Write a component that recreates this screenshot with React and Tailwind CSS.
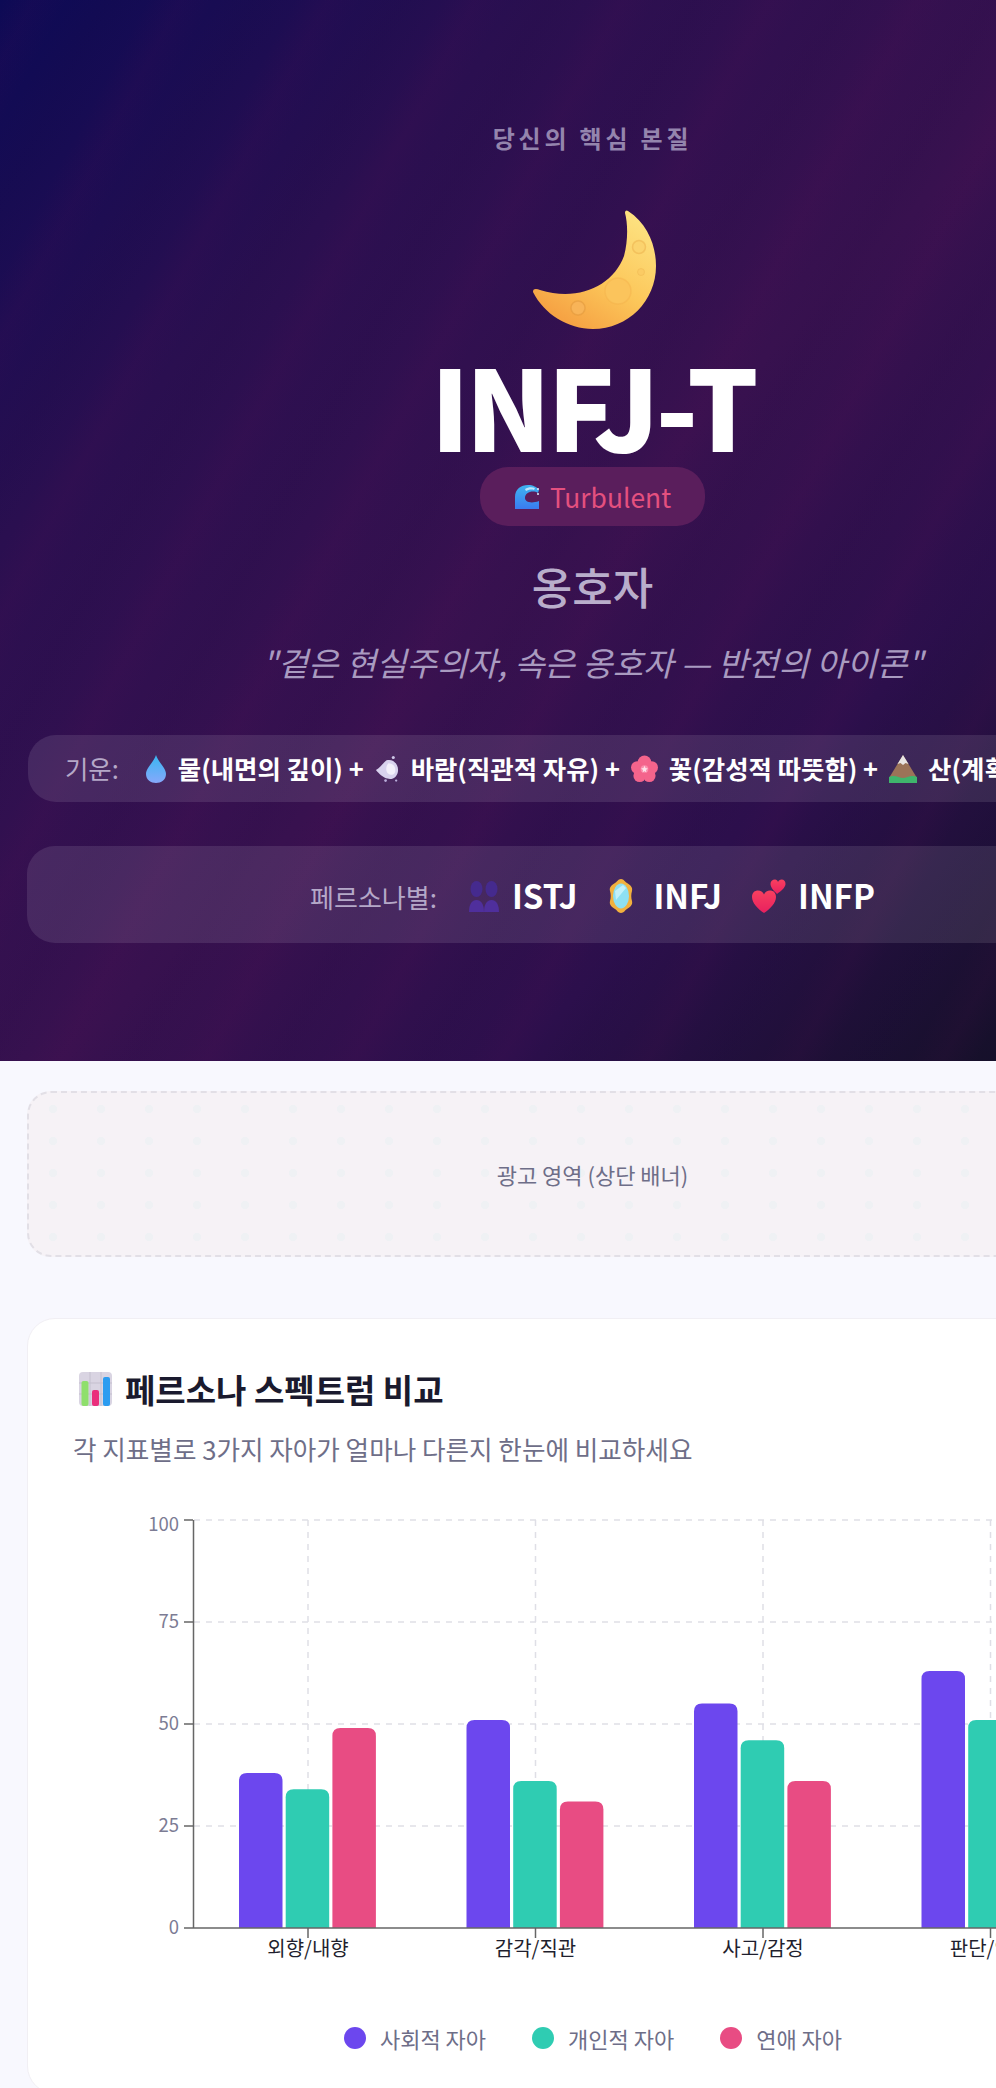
import React from "react";

const KR = { fontFamily: '"Noto Sans CJK KR", "Noto Sans", sans-serif' };

const groups = [
  { x: 307, label: "외향/내향", values: [38, 34, 49] },
  { x: 534.5, label: "감각/직관", values: [51, 36, 31] },
  { x: 762, label: "사고/감정", values: [55, 46, 36] },
  { x: 989.5, label: "판단/인식", values: [63, 51, 42] },
];
const barColors = ["#6c47ee", "#2fccb2", "#e84c83"];

function Moon() {
  return (
    <svg width="136" height="130" viewBox="0 0 136 130">
      <defs>
        <linearGradient id="moonFill" x1="0.85" y1="0.1" x2="0.3" y2="0.95">
          <stop offset="0" stopColor="#fde07e" />
          <stop offset="0.55" stopColor="#fcc75a" />
          <stop offset="1" stopColor="#f6a344" />
        </linearGradient>
      </defs>
      <path
        d="M100 5C120 18 128 40 128 60C128 95 100 123 65 123C40 123 16 108 5 86C5 82 9 83 12 84C50 96 85 80 96 50C100 35 100 18 97 7C97 4 99 4 100 5Z"
        fill="url(#moonFill)"
      />
      <circle cx="90" cy="85" r="13" fill="#fbc45c" stroke="#f0ac48" strokeOpacity="0.35" strokeWidth="1.5" />
      <circle cx="111" cy="41" r="6.500" fill="#fbd36e" stroke="#e8ab48" strokeOpacity="0.45" strokeWidth="1.5" />
      <circle cx="113" cy="66" r="3.500" fill="#fbcb64" stroke="#e8ab48" strokeOpacity="0.35" strokeWidth="1" />
      <circle cx="50" cy="102" r="7" fill="#f8b458" stroke="#dc9238" strokeOpacity="0.45" strokeWidth="1.5" />
    </svg>
  );
}

function Wave() {
  return (
    <svg width="26" height="26" viewBox="0 0 26 26">
      <defs>
        <linearGradient id="waveFill" x1="0" y1="0" x2="0" y2="1">
          <stop offset="0" stopColor="#3fb4f0" />
          <stop offset="1" stopColor="#3a7bf0" />
        </linearGradient>
      </defs>
      <path d="M1 25V13C1 5 7 1 14 1C19 1 23 3 25 6L24 9C19 6 11 8 11 14C11 18 17 20 25 17V25Z" fill="url(#waveFill)" />
      <path d="M11 5C14 3 18 3 21 4L20 6C17 5 14 6 12 7Z" fill="#bfe6fb" />
      <circle cx="24" cy="5" r="1" fill="#dff3fd" />
      <circle cx="24" cy="10" r="1" fill="#dff3fd" />
    </svg>
  );
}

function Drop() {
  return (
    <svg width="22" height="30" viewBox="0 0 22 30">
      <defs>
        <linearGradient id="dropFill" x1="0" y1="0" x2="0" y2="1">
          <stop offset="0" stopColor="#38b6f2" />
          <stop offset="1" stopColor="#86a8fb" />
        </linearGradient>
      </defs>
      <path d="M11 1C13 8 21 14 21 20C21 26 16 29 11 29C6 29 1 26 1 20C1 14 9 8 11 1Z" fill="url(#dropFill)" />
    </svg>
  );
}

function Wind() {
  return (
    <svg width="25" height="30" viewBox="0 0 26 30">
      <path d="M12 6C18 4 24 9 24 16C24 23 18 27 13 25C9 24 4 20 1 16C5 14 8 9 12 6Z" fill="#d8d2ee" />
      <path d="M14 9C19 9 22 13 21 18C20 21 16 22 14 20C11 18 11 12 14 9Z" fill="#f3f0fb" />
      <circle cx="19" cy="3" r="1.6" fill="#cfc8e8" />
      <circle cx="11" cy="27" r="1.4" fill="#b9aedb" />
      <circle cx="22" cy="27" r="1.2" fill="#b9aedb" />
    </svg>
  );
}

function Flower() {
  return (
    <svg width="27" height="30" viewBox="0 0 28 30">
      <g fill="#f4648c">
        <circle cx="14" cy="8" r="7" />
        <circle cx="6.5" cy="13.5" r="6.5" />
        <circle cx="21.5" cy="13.5" r="6.5" />
        <circle cx="9" cy="22" r="6.5" />
        <circle cx="19" cy="22" r="6.5" />
      </g>
      <circle cx="14" cy="15" r="4" fill="#fb8fae" />
      <path d="M14 11.5L15 14L17.5 14.5L15.5 16L16 18.5L14 17L12 18.5L12.500 16L10.500 14.500L13 14Z" fill="#fde2ea" />
    </svg>
  );
}

function Mountain() {
  return (
    <svg width="28" height="30" viewBox="0 0 28 30">
      <path d="M14 1L28 24V29H0V24Z" fill="#9b7358" />
      <path d="M14 1L19.500 10L16.500 9L14 11L11.500 9L8.500 10Z" fill="#e9e5e3" />
      <path d="M0 23C6 20 10 24 14 24C18 24 22 20 28 23V29H0Z" fill="#3fb56c" />
    </svg>
  );
}

function People() {
  return (
    <svg width="32" height="32" viewBox="0 0 32 32">
      <g fill="#452a8e">
        <ellipse cx="8.500" cy="9" rx="6" ry="8" />
        <ellipse cx="23.500" cy="9" rx="6" ry="8" />
      </g>
      <g fill="#4f2f9c">
        <path d="M1 32C1 24 4 20 8.500 20C13 20 16 24 16 32Z" />
        <path d="M16 32C16 24 19 20 23.500 20C28 20 31 24 31 32Z" />
      </g>
    </svg>
  );
}

function Mirror() {
  return (
    <svg width="24" height="34" viewBox="0 0 24 34">
      <path d="M12 0C15 0 16 3 18 4C21 6 24 8 23 12C22 15 22 19 23 22C24 26 21 28 18 30C16 31 15 34 12 34C9 34 8 31 6 30C3 28 0 26 1 22C2 19 2 15 1 12C0 8 3 6 6 4C8 3 9 0 12 0Z" fill="#f2b13e" />
      <ellipse cx="12" cy="17" rx="8" ry="12.500" fill="#8ee0f2" />
      <path d="M6 12L14 6L17 9L7 21Z" fill="#c3f1f9" />
    </svg>
  );
}

function Hearts() {
  return (
    <svg width="34" height="34" viewBox="0 0 34 34">
      <defs>
        <linearGradient id="heartFill" x1="0" y1="0" x2="0" y2="1">
          <stop offset="0" stopColor="#f8405f" />
          <stop offset="1" stopColor="#e8205f" />
        </linearGradient>
      </defs>
      <path d="M12 34C6 30 0 24 0 18C0 13.500 3 11.500 6 11.500C8.500 11.500 11 13 12 15.500C13 13 15.500 11.500 18 11.500C21 11.500 24 13.500 24 18C24 24 18 30 12 34Z" fill="url(#heartFill)" />
      <path d="M25 15C22 12 18.500 8.500 18.500 5C18.500 2 20.500 0.500 23 0.500C24.500 0.500 25.500 1.500 26 3C26.500 1.500 28 0.500 29.500 0.500C32 0.500 33.500 2 33.500 5C33.500 8.500 29 12 25 15Z" fill="url(#heartFill)" />
    </svg>
  );
}

function ChartEmoji() {
  return (
    <svg width="33" height="34" viewBox="0 0 33 34">
      <rect width="33" height="34" rx="4" fill="#d9d4e2" />
      <path d="M11 0V34M22 0V34M0 11H33M0 22H33" stroke="#c4bfce" strokeWidth="1" />
      <rect x="2.500" y="9" width="7" height="25" rx="2" fill="#8fdf6c" />
      <rect x="13" y="18" width="7" height="16" rx="2" fill="#ea2f7c" />
      <rect x="24" y="5" width="7" height="29" rx="2" fill="#2b9cf0" />
    </svg>
  );
}

function Chart() {
  const axis = "#666666";
  const gridLine = "#dfdfe6";
  return (
    <svg width="1040" height="470" viewBox="0 0 1040 470" className="block" style={KR}>
      <g transform="translate(-73 -1500)">
        {[1520, 1622, 1724, 1826].map((y) => (
          <line key={y} x1="193" x2="1103" y1={y} y2={y} stroke={gridLine} strokeWidth="1.500" strokeDasharray="6 6" />
        ))}
        {groups.map((g) => (
          <line key={g.x} x1={g.x} x2={g.x} y1="1520" y2="1928" stroke={gridLine} strokeWidth="1.500" strokeDasharray="6 6" />
        ))}
        {groups.map((g) =>
          g.values.map((v, i) => {
            const h = v * 4.08;
            const x = g.x - 69 + i * 46.7;
            const top = 1928 - h;
            return (
              <path
                key={i}
                d={`M${x} 1928V${top + 8}Q${x} ${top} ${x + 8} ${top}H${x + 35.5}Q${x + 43.5} ${top} ${x + 43.5} ${top + 8}V1928Z`}
                fill={barColors[i]}
              />
            );
          })
        )}
        <line x1="192.500" x2="192.500" y1="1520" y2="1928" stroke={axis} strokeWidth="1.500" />
        <line x1="192" x2="1103" y1="1928" y2="1928" stroke={axis} strokeWidth="1.500" />
        {[[100, 1520, 1525], [75, 1622, 1622], [50, 1724, 1724], [25, 1826, 1826], [0, 1928, 1928]].map(([n, y, ty]) => (
          <g key={n}>
            <line x1="183" x2="192" y1={y} y2={y} stroke={axis} strokeWidth="1.500" />
            <text x="178" y={ty + 6} textAnchor="end" fontSize="18.500" fill="#7c7c94">{n}</text>
          </g>
        ))}
        {groups.map((g) => (
          <g key={g.label}>
            <line x1={g.x} x2={g.x} y1="1928" y2="1938" stroke={axis} strokeWidth="1.500" />
            <text x={g.x} y="1956" textAnchor="middle" fontSize="20" fill="#1f1f2e">{g.label}</text>
          </g>
        ))}
      </g>
    </svg>
  );
}

function Legend({ color, label }) {
  return (
    <div className="flex items-center gap-[14px]">
      <span className={`h-[22px] w-[22px] rounded-full ${color}`} />
      <span className="text-[22px] leading-[30px] text-[#6e6e88]">{label}</span>
    </div>
  );
}

export default function App() {
  return (
    <div className="h-[2088px] w-[996px] overflow-hidden bg-[#f8f8fe]" style={KR}>
      <div className="w-[1185px]">
        <header className="relative h-[1061px] overflow-hidden bg-[linear-gradient(135deg,#0c0a55_0%,#2a0f50_24%,#38114f_50%,#2c0f4c_70%,#151029_92%,#0f0f28_100%)]">
          <div className="absolute inset-0 bg-[repeating-linear-gradient(118deg,rgba(110,15,90,0)_0px,rgba(110,15,90,0.07)_30px,rgba(110,15,90,0)_60px,rgba(20,10,60,0.05)_95px,rgba(110,15,90,0)_130px)]" />
          <div className="relative flex flex-col items-center px-[27px] pt-[120px]">
            <p className="text-[24px] font-semibold leading-[36px] tracking-[3.800px] text-[#9485ad]">당신의 핵심 본질</p>
            <div className="ml-[7px] mt-[50px]">
              <Moon />
            </div>
            <h1 className="mt-[12px] text-[112px] font-black leading-[110px] tracking-[-4px] text-white">INFJ-T</h1>
            <div className="mt-[9px] flex h-[59px] items-center gap-[10px] rounded-[28px] bg-[#5a1e5c] px-[34px]">
              <Wave />
              <span className="text-[26.400px] font-normal text-[#e4507f]">Turbulent</span>
            </div>
            <p className="mt-[30px] text-[44px] font-medium leading-[60px] text-[#b9aecb]">옹호자</p>
            <p className="mt-[24px] text-[33px] font-normal italic leading-[44px] text-[#a99bc0]">"겉은 현실주의자, 속은 옹호자 — 반전의 아이콘"</p>
            <div className="ml-[2px] mt-[51px] flex h-[67px] w-full items-center gap-[11px] overflow-hidden whitespace-nowrap rounded-[28px] bg-white/10 pl-[37px] text-[25.400px] font-semibold text-white">
              <span className="mr-[15px] font-normal text-[#b5a8c8]">기운:</span>
              <Drop />
              <span>물(내면의 깊이) +</span>
              <Wind />
              <span>바람(직관적 자유) +</span>
              <Flower />
              <span>꽃(감성적 따뜻함) +</span>
              <Mountain />
              <span>산(계획적 안정)</span>
            </div>
            <div className="mt-[44px] flex h-[97px] w-full items-center justify-center whitespace-nowrap rounded-[28px] bg-white/10 pt-[3px] text-[33px] font-bold text-white">
              <span className="mr-[31px] text-[26px] font-normal text-[#b5a8c8]">페르소나별:</span>
              <div className="mr-[32px] flex items-center gap-[12px]"><People /><span>ISTJ</span></div>
              <div className="mr-[30px] flex items-center gap-[20px]"><Mirror /><span>INFJ</span></div>
              <div className="flex items-center gap-[12px]"><Hearts /><span>INFP</span></div>
            </div>
          </div>
        </header>

        <main className="px-[27px] pt-[30px]">
          <div className="flex h-[166px] items-center justify-center rounded-[24px] border-2 border-dashed border-[#e2dfe6] bg-[#f6f2f6] bg-[radial-gradient(circle,#eff1f4_4px,transparent_4.500px)] bg-[length:48px_32px] text-[22px] text-[#6e6e88]">
            광고 영역 (상단 배너)
          </div>

          <section className="mt-[61px] h-[776px] rounded-[28px] border border-[#f1eff4] bg-white pl-[45px] pr-[44px] pt-[47px]">
            <div className="flex items-center gap-[13px] pl-[6px]">
              <ChartEmoji />
              <h2 className="text-[33px] font-bold leading-[46px] text-[#1a1a2e]">페르소나 스펙트럼 비교</h2>
            </div>
            <p className="mt-[19px] text-[25.600px] leading-[36px] text-[#6e6e88]">각 지표별로 3가지 자아가 얼마나 다른지 한눈에 비교하세요</p>
            <div className="ml-[1px] mt-[33px]">
              <Chart />
            </div>
            <div className="mt-[53px] flex items-center justify-center gap-[46px]">
              <Legend color="bg-[#6c47ee]" label="사회적 자아" />
              <Legend color="bg-[#2fccb2]" label="개인적 자아" />
              <Legend color="bg-[#e84c83]" label="연애 자아" />
            </div>
          </section>
        </main>
      </div>
    </div>
  );
}
